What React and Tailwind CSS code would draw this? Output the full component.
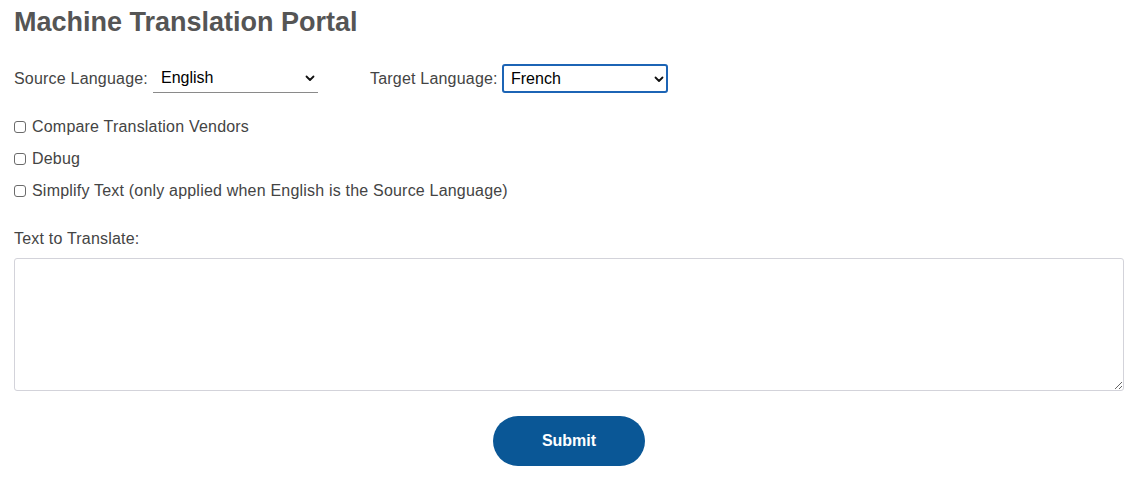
export default function App() {
  const font = { fontFamily: '"Liberation Sans", Arial, sans-serif' }
  const options = [
    { label: 'Compare Translation Vendors' },
    { label: 'Debug' },
    { label: 'Simplify Text (only applied when English is the Source Language)' },
  ]

  return (
    <div style={font} className="min-h-[500px] w-[1130px] bg-white pl-[14px] pr-[6px] text-[#444]">
      <h1 className="pt-[6px] text-[27px] font-bold leading-[32px] text-[#555]">Machine Translation Portal</h1>

      <div className="mt-[26px] flex h-[29px] items-center">
        <span className="w-[139px] text-[16px] tracking-[0.2px]">Source Language:</span>
        <div className="relative flex h-[29px] w-[165px] items-center border-b border-[#8a8a8a] pl-[8px] text-[16px] text-black">
          English
          <Chevron className="absolute right-[3px] top-[11px]" />
        </div>

        <span className="ml-[52px] w-[132px] text-[16px] tracking-[0.2px]">Target Language:</span>
        <div className="relative flex h-[29px] w-[166px] items-center rounded-[3px] border-2 border-[#1c64b5] pl-[7px] text-[16px] text-black">
          French
          <Chevron className="absolute right-[2px] top-[10px]" />
        </div>
      </div>

      <div className="mt-[24px] flex flex-col gap-[12px]">
        {options.map((o) => (
          <label key={o.label} className="flex h-[20px] items-center gap-[6px] text-[16px] tracking-[0.2px]">
            <span className="inline-block h-[12px] w-[12px] shrink-0 rounded-[3px] border border-[#6b6b6b] bg-white" />
            {o.label}
          </label>
        ))}
      </div>

      <div className="mt-[28px] text-[16px] leading-[20px] tracking-[0.2px]">Text to Translate:</div>
      <textarea className="mt-[9px] block h-[133px] w-full rounded-[3px] border border-[#d3d3da] outline-none" />

      <div className="mt-[25px] flex justify-center">
        <button
          type="button"
          className="h-[50px] w-[152px] rounded-full bg-[#0a5796] text-[16px] font-bold text-white"
        >
          Submit
        </button>
      </div>
    </div>
  )
}

function Chevron({ className }) {
  return (
    <svg className={className} width="10" height="7" viewBox="0 0 10 7" fill="none">
      <path d="M1.5 1.5 L5 5 L8.5 1.5" stroke="#111" strokeWidth="1.8" strokeLinecap="round" strokeLinejoin="round" />
    </svg>
  )
}
